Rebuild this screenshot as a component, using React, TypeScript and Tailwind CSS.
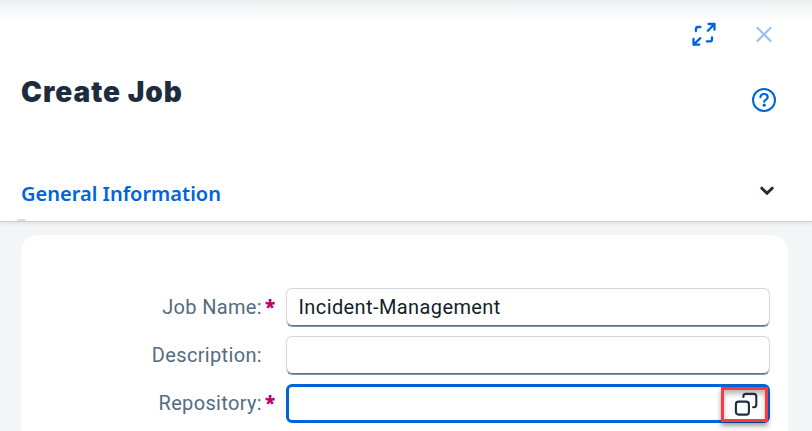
import type { ReactNode } from "react";

function ExpandIcon() {
  return (
    <svg className="h-6 w-6" viewBox="0 0 24 24" fill="none" stroke="#0064d9" strokeWidth="2.3" strokeLinecap="round" strokeLinejoin="round">
      <path d="M3.9 9V7.2Q3.9 5 6.1 5H8.4M20 15.3V17.2Q20 19.4 17.8 19.4H14.8" />
      <path d="M15.9 8.7L22.3 2.2M16.6 2H22.5V7.7M8.3 16.2L1.6 22.7M1.5 17V22.7H7.3" />
    </svg>
  );
}

function CloseIcon() {
  return (
    <svg className="h-4 w-4" viewBox="0 0 16 16" fill="none" stroke="#99c1f0" strokeWidth="2.1" strokeLinecap="round">
      <path d="M1.4 1.8L14.6 15M14.6 1.8L1.4 15" />
    </svg>
  );
}

function HelpIcon() {
  return (
    <svg className="h-6 w-6" viewBox="0 0 24 24" fill="none" stroke="#0064d9" strokeWidth="2" strokeLinecap="round" strokeLinejoin="round">
      <circle cx="12" cy="12" r="11" />
      <path d="M8.4 9.1C8.7 7 10.1 6 12 6C14.1 6 15.7 7.3 15.7 9.3C15.7 11.8 12.2 11.9 12.2 13.7" strokeWidth="2.2" />
      <circle cx="12.2" cy="17.2" r="1.6" fill="#0064d9" stroke="none" />
    </svg>
  );
}

function ValueHelpIcon() {
  return (
    <svg className="h-6 w-6" viewBox="0 0 24 24" fill="none" stroke="#1d2d3e" strokeWidth="2.1" strokeLinecap="round" strokeLinejoin="round">
      <rect x="1.9" y="9.6" width="13" height="13" rx="2.6" />
      <path d="M9.4 5V4.2Q9.4 1.9 11.7 1.9H19.8Q22.3 1.9 22.3 4.4V12.8Q22.3 15.2 19.9 15.2H19.1" />
    </svg>
  );
}

function Field({ label, required, children }: { label: string; required?: boolean; children: ReactNode }) {
  return (
    <div className="flex h-[39px]">
      <div className="flex w-[241px] justify-end text-[20px] leading-[38px] tracking-[0.34px] text-[#556b82]">{label}</div>
      <div className="w-6 pl-[3px] font-['Noto_Sans',sans-serif] text-[19px] leading-[38px] font-black text-[#ba066c]">{required ? "*" : ""}</div>
      {children}
    </div>
  );
}

const inputStyle =
  "h-[39px] w-[484px] rounded-[6px] border border-[#d3d8de] border-b-[#8896a6] bg-white pl-[11.5px] text-[20px] leading-[37px] tracking-[0.4px] text-[#131e29] shadow-[inset_0_-1px_0_#5b7088]";

export default function App() {
  return (
    <main className="flex h-[431px] w-[812px] flex-col overflow-hidden bg-[#f4f5f7] font-[Roboto,sans-serif]">
      <header className="relative z-10 flex h-[222px] shrink-0 flex-col border-b border-[#d0d1d3] bg-white bg-[linear-gradient(#ebecee_0px,#f5f6f7_8px,#fff_21px)] pl-[21px] shadow-[0_1px_5px_#0000001c]">
        <div className="flex h-[68px] items-center justify-end gap-10 pr-10">
          <button aria-label="Full screen"><ExpandIcon /></button>
          <button aria-label="Close"><CloseIcon /></button>
        </div>
        <div className="flex h-[102px] justify-between pr-9">
          <h1 className="pt-[6px] font-[Inter,sans-serif] text-[28px] leading-[36px] font-black tracking-[1px] text-[#1d2d3e]">Create Job</h1>
          <button aria-label="Help" className="mt-[20px] h-6"><HelpIcon /></button>
        </div>
        <div className="flex h-[47px] justify-between pr-[38px]">
          <h2 className="font-['Noto_Sans',sans-serif] text-[20px] leading-[48px] font-semibold text-[#0064d9]">General Information</h2>
          <svg className="mt-[16px] h-[10px] w-[14px]" viewBox="0 0 14 10" fill="none" stroke="#1d2d3e" strokeWidth="3" strokeLinecap="round" strokeLinejoin="round">
            <path d="M1.8 2.2L7 7.3L12.2 2.2" />
          </svg>
        </div>
        <div className="mt-[2px] -ml-[4px] h-[2px] w-[9px] rounded-t bg-[#d9dbde]" />
      </header>
      <section className="mt-[13px] mr-6 ml-[21px] flex h-[220px] flex-col gap-[9px] rounded-t-[17px] bg-white pt-[53px]">
        <Field label="Job Name:" required>
          <div className={inputStyle}>Incident-Management</div>
        </Field>
        <Field label="Description:">
          <div className={inputStyle} />
        </Field>
        <Field label="Repository:" required>
          <div className="flex h-[39px] w-[484px] justify-end rounded-[6px] border-[3px] border-[#0064d9] bg-white">
            <div className="-mr-[1px] flex h-[35px] w-[47px] items-center justify-center border-[3px] border-[#f93a42] pl-[3px] shadow-[0_4px_5px_#00000060,inset_0_4px_5px_#00000045]">
              <div className="-mt-px"><ValueHelpIcon /></div>
            </div>
          </div>
        </Field>
      </section>
    </main>
  );
}
